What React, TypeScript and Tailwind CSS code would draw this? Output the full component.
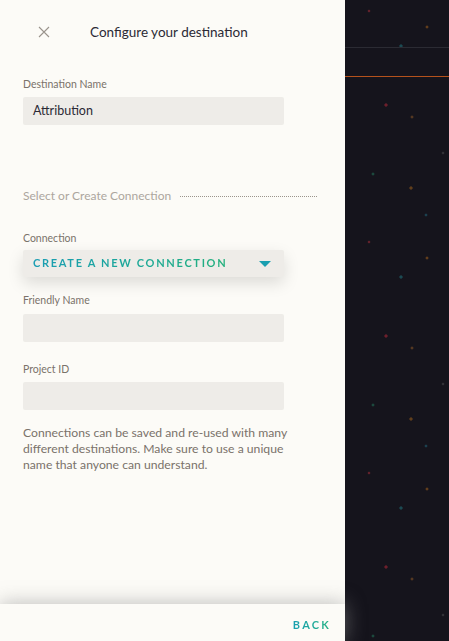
import React from "react";

const font = { fontFamily: "Lato, 'Noto Sans', sans-serif" };

const Label = ({ text, className }: { text: string; className?: string }) => (
  <div className={"text-[10.5px] leading-[14px] text-[#7a726a] " + (className || "")}>{text}</div>
);

const Input = ({ value, className }: { value?: string; className?: string }) => (
  <div
    className={
      "h-[28px] w-[261px] rounded-[2px] bg-[#eeece8] px-[10px] flex items-center text-[12.5px] text-[#2b2a35] " +
      (className || "")
    }
  >
    {value}
  </div>
);

// repeating star pattern in the dark canvas (period 231px)
const stars: [number, number, string, number][] = [
  [24, 11, "#7a2530", 1.2],
  [82, 27, "#7a4a1a", 1.4],
  [56, 46, "#1d5c63", 1.8],
  [41, 105, "#8a2230", 1.8],
  [67, 117, "#6a4322", 1.4],
  [98, 153, "#3a3a3e", 1.2],
  [28, 174, "#1e5a48", 1.4],
  [66, 188, "#7a4d1a", 1.8],
  [81, 215, "#1d5060", 1.3],
];

const Starfield = () => (
  <svg width="104" height="641" className="block">
    <defs>
      <pattern id="stars" width="104" height="231" patternUnits="userSpaceOnUse">
        {stars.map(([x, y, c, r], i) => (
          <g key={i}>
            <rect x={x - r} y={y - 0.5} width={r * 2} height={1} fill={c} />
            <rect x={x - 0.5} y={y - r} width={1} height={r * 2} fill={c} />
          </g>
        ))}
      </pattern>
    </defs>
    <rect width="104" height="641" fill="url(#stars)" />
    <rect x="0" y="47" width="104" height="1" fill="#2b2b33" />
    <rect x="0" y="76" width="104" height="1" fill="#b5521c" />
  </svg>
);

export default function App() {
  return (
    <div className="flex h-[641px] w-[449px] overflow-hidden bg-[#15141c]" style={font}>
      <div className="relative z-10 flex h-full w-[345px] shrink-0 flex-col bg-[#fcfbf7]">
        <div className="flex h-[64px] items-center pl-[38px]">
          <svg width="12" height="12" viewBox="0 0 12 12" className="text-[#9a948c]">
            <path d="M1 1L11 11M11 1L1 11" stroke="currentColor" strokeWidth="1.1" />
          </svg>
          <div className="ml-[40px] text-[13.5px] text-[#2b2a35]">Configure your destination</div>
        </div>

        <div className="flex flex-col px-[23px]">
          <Label text="Destination Name" className="mt-[13px]" />
          <Input value="Attribution" className="mt-[6px]" />

          <div className="mt-[63px] flex items-center">
            <div className="text-[12px] leading-[16px] text-[#aca69e]">Select or Create Connection</div>
            <div className="ml-[9px] mr-[5px] h-0 flex-1 border-t border-dotted border-[#9a948c]" />
          </div>

          <Label text="Connection" className="mt-[27px]" />
          <div className="mt-[5px] flex h-[27px] w-[261px] items-center justify-between rounded-[2px] bg-[#eeece8] pl-[10px] pr-[13px] shadow-[0_6px_16px_rgba(0,0,0,0.13)]">
            <span className="bg-gradient-to-r from-[#1b9db3] to-[#23b07c] bg-clip-text text-[11px] font-bold tracking-[1.7px] text-transparent">
              CREATE A NEW CONNECTION
            </span>
            <svg width="12" height="6" viewBox="0 0 12 6">
              <path d="M0 0H12L6 6Z" fill="#1a9fb0" />
            </svg>
          </div>

          <Label text="Friendly Name" className="mt-[16px]" />
          <Input className="mt-[7px]" />

          <Label text="Project ID" className="mt-[20px]" />
          <Input className="mt-[6px]" />

          <p className="mt-[15px] w-[275px] text-[12.2px] leading-[16px] text-[#7a726a]">
            Connections can be saved and re-used with many different destinations. Make sure to use a unique name that
            anyone can understand.
          </p>
        </div>

        <div className="flex-1" />

        <div className="flex h-[37px] items-center justify-end bg-[#fcfbf7] pr-[14px] pt-[5px] shadow-[0_0_20px_rgba(140,140,140,0.6)]">
          <span className="bg-gradient-to-r from-[#1a9fb0] to-[#2ab385] bg-clip-text text-[11px] font-bold tracking-[2.2px] text-transparent">
            BACK
          </span>
        </div>
      </div>
      <Starfield />
    </div>
  );
}
